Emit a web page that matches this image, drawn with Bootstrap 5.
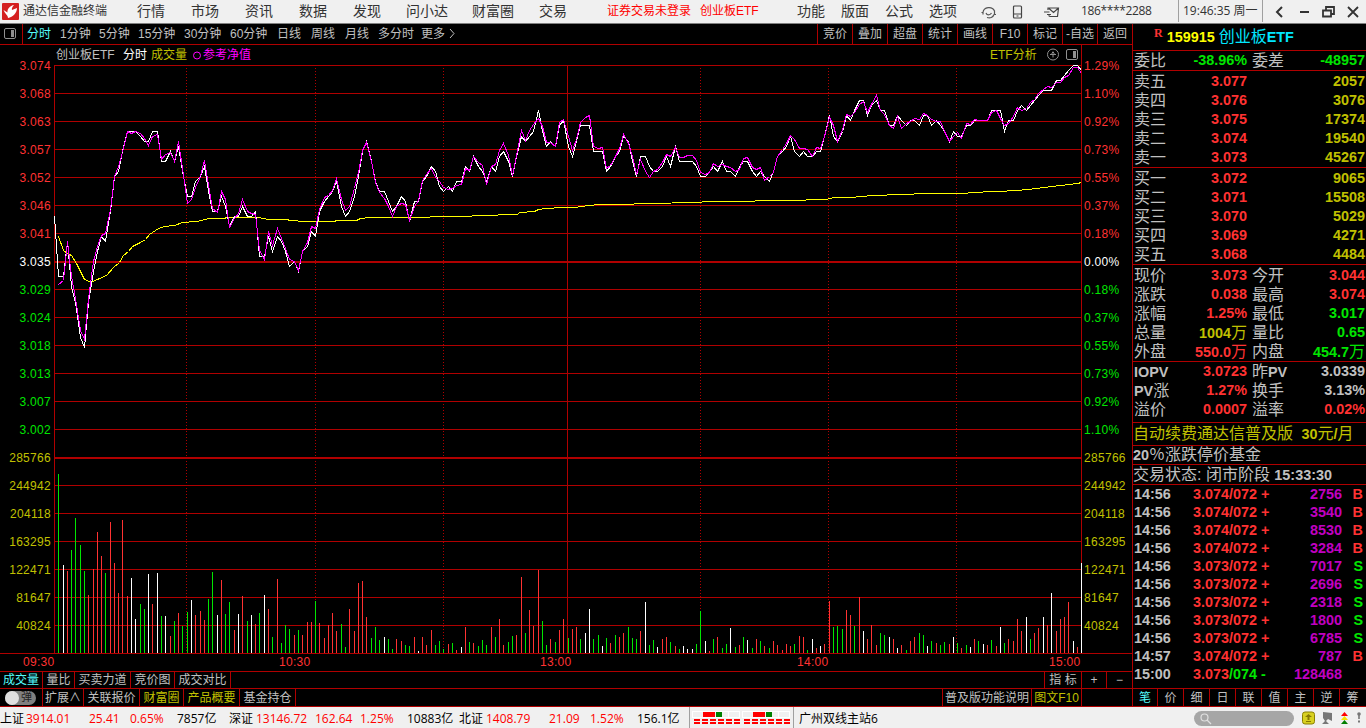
<!DOCTYPE html>
<html lang="zh-CN">
<head>
    <meta charset="UTF-8">
    <meta name="viewport" content="width=device-width, initial-scale=1.0">
    <title>通达信金融终端</title>
    <link href="https://cdn.jsdelivr.net/npm/bootstrap@5.3.0/dist/css/bootstrap.min.css" rel="stylesheet">
    <style>
        :root { --line: #b00000; --up: #ff3232; --down: #00e600; --txt: #c0c0c0; --gold: #c0c000; --cyan: #54fcfc; --vol: #c000c0; }
        html, body { height: 728px; overflow: hidden; }
        body { width: 1366px; background: #000; color: var(--txt); font: 12px/18px "Liberation Sans", "Noto Sans CJK SC", sans-serif; white-space: nowrap; }
        svg { display: block; }

        /* barre de titre */
        .topbar { height: 24px; background: #f0f0f0; border-bottom: 1px solid #808080; color: #333; font-size: 14px; line-height: 22px;
            grid-template-columns: 23px 114px repeat(4, 54px) 53px 66px 67px 68px 93px 97px 44px 44px 44px 52px 31px 32px 37px 97px 84px 12px 25px 23px 25px 18px; }
        .topbar .ui, .statusbar { font-family: "Open Sans", "Noto Sans CJK SC", sans-serif; }
        .topbar > svg { align-self: center; }
        .topbar .ui { letter-spacing: -.35px; }
        .topbar .clock { letter-spacing: 0; }
        .fs12 { font-size: 12px; }
        .hot { color: #f00; }
        .rule { border-left: 1px solid #a0a0a0; height: 22px; }

        .left-pane { width: 1132px; }
        .right-pane { width: 234px; border-left: 1px solid var(--line); }

        .toolbar { height: 21px; border-bottom: 1px solid var(--line); line-height: 20px;
            grid-template-columns: 22px 38px 39px 39px 46px 46px 47px 34px 34px 33px 43px 1fr; }
        .toolbar .periods-start { border-left: 1px solid var(--line); padding-left: 4px; }
        .tools span { width: 35px; border-left: 1px solid var(--line); text-align: center; }
        .chart-title { height: 20px; line-height: 21px; grid-template-columns: 56px 67px 28px 42px 797px 56px 19px 16px 1fr; }
        .chart-end { border-left: 1px solid var(--line); }
        .plot { overflow: visible; }
        .plot text { font: 12px "Liberation Sans", sans-serif; letter-spacing: .3px; }

        .tabrow { height: 17px; line-height: 16px; }
        .tabrow + .tabrow { height: 18px; line-height: 18px; }
        .tabrow, .split { border-bottom: 1px solid var(--line); }
        .tabrow span { border-right: 1px solid var(--line); text-align: center; }
        .w32 { width: 32px; } .w41 { width: 41px; } .w43 { width: 43px; } .w44 { width: 44px; } .w56 { width: 56px; }
        .w37 { width: 37px; } .w25 { width: 25px; } .w50 { width: 50px; } .w89 { width: 89px; }
        .toggle-pill { width: 31px; height: 14px; margin: 2px 6px 0 5px; border-radius: 7px; background: #808080; color: #222; font-size: 11px; line-height: 13px; padding-left: 16px; position: relative; }
        .toggle-pill::before { content: ""; position: absolute; left: 0; top: 0; width: 14px; height: 14px; border-radius: 50%; background: #e0e0e0; }

        /* panneau de cotation */
        .quote { font-size: 16px; line-height: 19px; }
        .quote b, .ticks { font: bold 14.4px/19px "Liberation Sans", sans-serif; }
        .quote-title { height: 27px; line-height: 26px; padding-left: 21px; color: #00e6ff; }
        .quote-title .flag { font-family: "Liberation Serif", serif; font-size: 12px; color: var(--up); }
        .quote-title .code { line-height: 27px; color: #ff0; }
        .qrow { display: grid; grid-template-columns: 42px 71px 5px 40px 73px; height: 19px; padding-left: 1px; }
        .qrow b { text-align: right; }
        .unit { font: 16px/16px "Noto Sans CJK SC", sans-serif; }
        .block5 { height: 97px; padding-top: 1px; } .block3 { height: 61px; }
        .h19 { height: 19px; line-height: 17px; } .h20 { height: 20px; } .h23 { height: 23px; line-height: 21px; }
        .ticks div { display: grid; grid-template-columns: 59px 68px 16px 65px 21px; height: 18px; line-height: 18px; padding-left: 1px; }
        .ticks { height: 204px; }
        .ticks i { font-style: normal; }
        .qtabs { height: 18px; line-height: 18px; }
        .qtabs span { width: 26px; border-left: 1px solid var(--line); text-align: center; }
        .qtabs span:first-child { width: 24px; border-left: 0; }
        .up { color: var(--up); } .dn { color: var(--down); } .gold { color: var(--gold); } .vol { color: var(--vol); }
        .cy { color: var(--cyan); } .wh { color: #fff; } .mg { color: #f0f; } .gy { color: var(--txt); }

        .statusbar { height: 21px; background: #f0f0f0; color: #000; line-height: 24px; font-size: 12px; grid-template-rows: 21px;
            grid-template-columns: 26px 63px 41px 47px 52px 27px 59px 45px 47px 52px 27px 63px 41px 47px 52px 104px 6px 395px 108px 19px 19px 16px 10px; }
        .statusbar em { font-style: normal; color: #f00; }
        .statusbar > svg { align-self: center; }
        .searchbox { width: 100px; height: 15px; margin-top: 4px; border-radius: 8px; background: #a6a6a6; padding: 1px 5px; }
    </style>
</head>
<body>
    <header class="topbar d-grid">
        <svg width="20" height="22" viewBox="0 0 20 22"><rect x="2" y="2" width="17" height="17" rx="1" fill="#d42020"/><path d="M3.500 9l4 2.500C7 8 10 4.500 14 4c-2 2-2.500 4-2 5l5-2c0 5-4 9-9 10 0-3-3-4-4.500-8z" fill="#fff"/></svg>
        <span class="fs12">通达信金融终端</span>
        <span>行情</span><span>市场</span><span>资讯</span><span>数据</span><span>发现</span><span>问小达</span><span>财富圈</span><span>交易</span>
        <span class="fs12 hot">证券交易未登录</span>
        <span class="fs12 hot">创业板ETF</span>
        <span>功能</span><span>版面</span><span>公式</span><span>选项</span>
        <svg width="16" height="16" fill="none" stroke="#555" stroke-width="1.200"><path d="M2 10.500V8.500a6 5.500 0 0 1 11.500-1.500M.5 8.500h2M13.500 6.500v4h1.500M13 10.500c-1 3-4 4-7 3M5 9c1 2.500 4 2.500 5.500 0"/></svg>
        <svg width="12" height="16" fill="none" stroke="#444" stroke-width="1.200"><rect x="1.500" y="2" width="8" height="12" rx="1"/><path d="M1.500 10h8M4.500 12h2"/></svg>
        <svg width="16" height="16" fill="none" stroke="#444" stroke-width="1.200"><path d="M4 6V4h10.500l-1 8.500H6l-1.500-1M5 4.500l4.500 4 5-4.500M0 8h5.500M3 10.500h4"/></svg>
        <span class="ui fs12">186****2288</span>
        <span class="ui clock fs12 rule ps-1">19:46:35 周一</span>
        <span class="rule"></span>
        <svg width="12" height="16" fill="none" stroke="#333" stroke-width="2"><path d="M8 3L3 8l5 5"/></svg>
        <svg width="12" height="16"><path d="M1 7h9v2H1z" fill="#333"/></svg>
        <svg width="14" height="16" fill="none" stroke="#333" stroke-width="1.800"><path d="M4 6V3h8v7H9"/><path d="M1 6.500h8v6H1z"/></svg>
        <svg width="14" height="16" fill="none" stroke="#333" stroke-width="1.800"><path d="M1 3l10 10M11 3L1 13"/></svg>
    </header>

    <div class="d-flex">
        <!-- Graphique intraday -->
        <main class="left-pane">
            <nav class="toolbar d-grid">
                <svg width="20" height="20"><rect x="4.500" y="4.500" width="11" height="10" rx="1.500" fill="none" stroke="#909090"/><path d="M11 6h3v7h-3z" fill="#909090"/></svg>
                <span class="periods-start cy">分时</span><span>1分钟</span><span>5分钟</span><span>15分钟</span><span>30分钟</span><span>60分钟</span><span>日线</span><span>周线</span><span>月线</span><span>多分时</span>
                <span class="d-flex">
                    <span>更多</span>
                    <svg width="11" height="20" fill="none" stroke="#c0c0c0"><path d="M5 5l4 4.500L5 14"/></svg>
                    <span class="tools d-flex ms-auto"><span>竞价</span><span>叠加</span><span>超盘</span><span>统计</span><span>画线</span><span>F10</span><span>标记</span><span>-自选</span><span>返回</span></span>
                </span>
            </nav>
            <div class="chart-title d-grid">
                <span></span><span>创业板ETF</span><span class="wh">分时</span><span class="gold">成交量</span>
                <span class="mg d-flex"><svg width="10" height="20" fill="none" stroke="#f0f"><circle cx="4" cy="10.500" r="3.500"/></svg>参考净值</span>
                <span class="gold">ETF分析</span>
                <svg width="14" height="20" fill="none" stroke="#909090"><circle cx="7" cy="9.500" r="5.500"/><path d="M7 6.500v6M4 9.500h6M5.500 8.500L7 7l1.500 1.500"/></svg>
                <svg width="14" height="20"><rect x="1.500" y="4.500" width="11" height="10" rx="1.500" fill="none" stroke="#909090"/><path d="M8 6h3v7H8z" fill="#909090"/></svg>
                <span class="chart-end"></span>
            </div>
            <svg class="plot" id="plot" width="1132" height="607" viewBox="0 65 1132 607" shape-rendering="crispEdges"></svg>
            <div class="tabrow d-flex">
                <span class="w43 cy">成交量</span><span class="w32">量比</span><span class="w56">买卖力道</span><span class="w44">竞价图</span><span class="w56">成交对比</span>
                <span class="ms-auto"></span><span class="w37">指 标</span><span class="w25">+</span><span class="w25 border-0">−</span>
            </div>
            <div class="tabrow d-flex">
                <div class="toggle-pill">弹</div><span></span>
                <span class="w41">扩展∧</span><span class="w56">关联报价</span><span class="w44 gold">财富圈</span><span class="w56 gold">产品概要</span><span class="w56">基金持仓</span>
                <span class="ms-auto"></span><span class="w89">普及版功能说明</span><span class="w50 gold">图文F10</span><span class="w50 border-0"></span>
            </div>
        </main>

        <!-- Panneau de droite -->
        <aside class="right-pane quote">
            <div class="quote-title split d-flex"><b class="flag me-1">R</b><b class="code me-1">159915</b><span>创业板<b>ETF</b></span></div>
            <div class="split h20"><div class="qrow"><span>委比</span><b class="dn">-38.96%</b><i></i><span>委差</span><b class="dn">-48957</b></div></div>
            <div class="split block5" id="asks"></div>
            <div class="split block5" id="bids"></div>
            <div class="split block5" id="stats"></div>
            <div class="split block3" id="fund"></div>
            <div class="split gold h23">自动续费通达信普及版 <b class="ms-1">30</b>元<b>/</b>月</div>
            <div class="split h19"><b>20</b>％涨跌停价基金</div>
            <div class="split h20">交易状态: 闭市阶段 <b>15:33:30</b></div>
            <div class="split ticks" id="ticks"></div>
            <div class="qtabs split d-flex fs12"><span class="cy">笔</span><span>价</span><span>细</span><span>日</span><span>联</span><span>值</span><span>主</span><span>逆</span><span>筹</span></div>
        </aside>
    </div>

    <footer class="statusbar d-grid">
        <span>上证</span><em>3914.01</em><em>25.41</em><em>0.65%</em><span>7857亿</span>
        <span>深证</span><em>13146.72</em><em>162.64</em><em>1.25%</em><span>10883亿</span>
        <span>北证</span><em>1408.79</em><em>21.09</em><em>1.52%</em><span>156.1亿</span>
        <svg id="meter" width="105" height="21" shape-rendering="crispEdges"></svg>
        <span></span>
        <span>广州双线主站6</span>
        <div class="searchbox"><svg width="13" height="13" fill="none" stroke="#e0e0e0" stroke-width="1.200"><circle cx="5.500" cy="5.500" r="3.500"/><path d="M8 8l4 4"/></svg></div>
        <svg width="13" height="14"><rect x=".5" y="1" width="12" height="12" rx="2.500" fill="#d8d020" stroke="#8a8000"/><path d="M6.500 3L10 6H7.500v3h-2V6H3zM4 10h5v1H4z" fill="#867800"/></svg>
        <svg width="13" height="14" fill="#777"><path d="M2 1l9 1v8l-4-2-2 2 3 3H1l3-3-2-3z"/></svg>
        <svg width="9" height="14"><path d="M4.500 1L8 5H1z" fill="red"/><path d="M4.500 5L8 9H1z" fill="#f5e000"/><path d="M4.500 9L8 13H1z" fill="green"/></svg>
        <svg width="6" height="14" fill="#777"><circle cx="3" cy="3" r="1.800"/><path d="M2.200 4h1.600v4H2.200zM2 9.500h2v2H2z"/></svg>
    </footer>

    <script src="https://cdn.jsdelivr.net/npm/bootstrap@5.3.0/dist/js/bootstrap.bundle.min.js"></script>
    <script>
        // Carnet d'ordres et statistiques
        const row = (a, b, bc, c = '', d = '', dc = 'gold') =>
            `<div class="qrow"><span>${a}</span><b class="${bc}">${b}</b><i></i><span>${c}</span><b class="${dc}">${d}</b></div>`;
        const unit = '<span class="unit">万</span>';
        const fill = (id, rows) => document.getElementById(id).innerHTML = rows.map(r => row(...r)).join('');

        fill('asks', [['卖五', '3.077', 'up', '', '2057'], ['卖四', '3.076', 'up', '', '3076'], ['卖三', '3.075', 'up', '', '17374'], ['卖二', '3.074', 'up', '', '19540'], ['卖一', '3.073', 'up', '', '45267']]);
        fill('bids', [['买一', '3.072', 'up', '', '9065'], ['买二', '3.071', 'up', '', '15508'], ['买三', '3.070', 'up', '', '5029'], ['买四', '3.069', 'up', '', '4271'], ['买五', '3.068', 'up', '', '4484']]);
        fill('stats', [['现价', '3.073', 'up', '今开', '3.044', 'up'], ['涨跌', '0.038', 'up', '最高', '3.074', 'up'], ['涨幅', '1.25%', 'up', '最低', '3.017', 'dn'],
            ['总量', '1004' + unit, 'gold', '量比', '0.65', 'dn'], ['外盘', '550.0' + unit, 'up', '内盘', '454.7' + unit, 'dn']]);
        fill('fund', [['<b>IOPV</b>', '3.0723', 'up', '昨<b>PV</b>', '3.0339', 'gy'], ['<b>PV</b>涨', '1.27%', 'up', '换手', '3.13%', 'gy'], ['溢价', '0.0007', 'up', '溢率', '0.02%', 'up']]);

        // Transactions
        const ticks = [['14:56', 4, 2756, 'B'], ['14:56', 4, 3540, 'B'], ['14:56', 4, 8530, 'B'], ['14:56', 4, 3284, 'B'], ['14:56', 3, 7017, 'S'], ['14:56', 3, 2696, 'S'],
            ['14:56', 3, 2318, 'S'], ['14:56', 3, 1800, 'S'], ['14:56', 3, 6785, 'S'], ['14:57', 4, 787, 'B']];
        document.getElementById('ticks').innerHTML = ticks.map(([t, p, v, s]) =>
            `<div><i>${t}</i><i class="up">3.07${p}/072</i><i class="up">+</i><i class="vol text-end">${v}</i><i class="${s === 'B' ? 'up' : 'dn'} text-end">${s}</i></div>`).join('') +
            '<div><i>15:00</i><i class="up">3.073<i class="dn">/074</i></i><i class="dn">-</i><i class="vol text-end">128468</i></div>';

        // Grille et axes
        const rect = (x, y, w, h, c) => `<rect x="${x}" y="${y}" width="${w}" height="${h}" fill="${c}"/>`;
        const RED = '#b00000';
        let svg = '';
        for (let k = 0; k < 21; k++) {
            const y = 65 + 28 * k;
            svg += rect(54, y, 1028, k === 7 || k === 14 ? 2 : 1, RED);
        }
        [54, 567, 1081].forEach(x => svg += rect(x, 65, 1, 588, RED));
        [186, 315, 443, 700, 828, 956].forEach(x => {
            svg += `<path d="M${x + .5} 68V653" stroke="${RED}" stroke-dasharray="1 2"/>`;
        });
        svg += rect(0, 653, 1132, 1, RED) + rect(0, 671, 1132, 1, RED);

        const prices = ['3.074', '3.068', '3.063', '3.057', '3.052', '3.046', '3.041', '3.035', '3.029', '3.024', '3.018', '3.013', '3.007', '3.002'];
        const pcts = ['1.29%', '1.10%', '0.92%', '0.73%', '0.55%', '0.37%', '0.18%', '0.00%', '0.18%', '0.37%', '0.55%', '0.73%', '0.92%', '1.10%'];
        const vols = [285766, 244942, 204118, 163295, 122471, 81647, 40824];
        const label = (x, y, t, c, end) => `<text x="${x}" y="${y}" fill="${c}" ${end ? 'text-anchor="end"' : ''}>${t}</text>`;
        prices.forEach((p, k) => {
            const c = k < 7 ? '#ff3232' : k === 7 ? '#fff' : '#00e600';
            svg += label(51, 70 + 28 * k, p, c, true) + label(1084, 70 + 28 * k, pcts[k], c);
        });
        vols.forEach((v, k) => svg += label(51, 462 + 28 * k, v, '#c0c000', true) + label(1084, 462 + 28 * k, v, '#c0c000'));
        [[23, '09:30'], [279, '10:30'], [540, '13:00'], [797, '14:00'], [1049, '15:00']].forEach(([x, t]) => svg += label(x, 666, t, '#ff3232'));

        // Volume par minute : couleur + hauteur en pixels, une ligne par demi-heure
        const volume = [
            'g179 w88 r82 g103 g135 g108 g82 r58 r84 r121 r97 g80 r131 r90 r60 r133 r57 w75 w34 g49 g44 w79 r49 w80 g37 w37 r17 g32 r40 g27',
            'g41 w53 r38 r42 r33 g54 g81 w38 r73 g39 g51 r23 w39 r57 g32 w38 r29 g40 w58 r44 g16 r74 g10 g28 g24 r18 g23 r18 r31 r31',
            'g52 r30 r15 r28 r40 r22 g29 g6 r44 r22 r70 r72 r36 g15 g26 g13 w16 g14 g4 r14 r12 g8 g7 r16 w2 r16 r8 r23 g8 g12',
            'g4 r9 g10 r3 w6 r26 g11 r10 g7 g13 g8 r26 g16 r34 r8 g11 g17 r18 r76 g20 r43 r27 r83 g32 g8 r14 g11 r23 r34 g15',
            'r24 r26 g14 w20 w44 g14 g18 w7 g15 r10 g18 r16 r20 g26 g15 g14 r22 w51 g8 g13 w6 r14 r16 g11 r7 g4 w7 w4 w4 g9',
            'g42 w12 r2 g14 r16 g5 g9 w25 g6 r8 g16 w13 g5 r14 g12 r7 g5 r12 r8 r3 r9 r7 g9 r17 r16 g3 w14 r5 w7 r9',
            'r52 g26 g27 g24 r43 r38 g27 r56 w22 r14 r28 r8 g20 g18 w16 r14 w5 r8 g3 r12 r16 g20 g18 w7 g12 r10 g8 g11 r9 w16',
            'g10 r5 g8 w6 r14 g12 w9 r8 g13 r7 w26 g10 r14 r12 r34 r22 w36 g14 r20 r25 w36 r28 w60 r22 r34 r36 r51 w12 r6 w90'
        ].join(' ').split(' ');
        const tone = { r: '#ff3232', g: '#00e600', w: '#fff' };
        volume.forEach((v, k) => {
            const h = +v.slice(1);
            svg += rect(Math.round(54 + 4.28 * (k + 1)), 653 - h, 1, h, tone[v[0]]);
        });

        // Cours, en millièmes par rapport à la clôture précédente (3.035)
        const last = [9, -3, -3, 4, -5, -8, -15, -17, -8, -2, 2, 5, 4, 10, 17, 18, 22, 26, 26, 26, 25, 24, 24, 26, 26, 20, 20, 22, 20, 23, 18, 13, 13, 16, 17, 19, 14, 10, 10, 13,
            11, 7, 9, 9, 11, 9, 9, 10, 1, 1, 5, 2, 5, 4, 2, -1, 0, -2, 2, 3, 6, 5, 10, 12, 13, 14, 16, 11, 9, 10, 13, 17, 22, 24, 20, 16, 14, 14, 12, 10,
            11, 13, 12, 8, 12, 12, 16, 17, 19, 18, 15, 14, 15, 14, 16, 16, 19, 18, 21, 19, 18, 16, 19, 18, 21, 22, 20, 17, 21, 25, 24, 25, 26, 30, 26, 23, 24, 23, 27, 28,
            23, 21, 24, 27, 27, 27, 22, 22, 22, 18, 19, 21, 22, 25, 24, 20, 17, 21, 21, 19, 18, 18, 19, 21, 19, 23, 20, 20, 20, 20, 19, 17, 17, 18, 19, 18, 20, 18, 18, 17,
            19, 20, 20, 18, 17, 18, 17, 16, 18, 21, 22, 23, 25, 22, 21, 22, 21, 21, 22, 22, 25, 29, 25, 24, 26, 29, 28, 30, 32, 32, 29, 31, 32, 30, 30, 27, 27, 29, 28, 27,
            28, 28, 27, 29, 29, 27, 28, 27, 26, 24, 26, 25, 25, 27, 27, 28, 28, 28, 28, 30, 30, 30, 26, 28, 28, 30, 31, 30, 31, 32, 33, 34, 34, 34, 36, 36, 37, 38, 39, 39, 38];
        // Valeur nette de référence, en tiers de pixel
        const nav = [674, 660, 545, 650, 715, 810, 838, 715, 605, 560, 527, 521, 448, 350, 320, 278, 214, 219, 213, 221, 236, 257, 230, 223, 297, 282, 276, 304, 245, 325,
            430, 418, 382, 348, 300, 375, 446, 457, 393, 418, 502, 475, 460, 419, 453, 461, 463, 570, 598, 515, 556, 506, 535, 565, 598, 605, 632, 575, 548, 500,
            506, 448, 412, 405, 392, 356, 418, 452, 440, 385, 338, 270, 247, 305, 367, 398, 415, 440, 470, 440, 430, 433, 481, 438, 420, 362, 343, 325, 351, 365,
            381, 388, 386, 376, 373, 325, 332, 290, 306, 316, 374, 318, 312, 272, 250, 285, 347, 285, 212, 242, 210, 192, 175, 200, 248, 247, 259, 187, 179, 228,
            270, 238, 188, 172, 166, 258, 266, 262, 324, 316, 290, 265, 223, 249, 290, 342, 298, 333, 352, 333, 328, 308, 283, 289, 263, 293, 292, 286, 286, 300,
            338, 344, 337, 311, 320, 312, 319, 323, 334, 328, 294, 293, 322, 328, 322, 360, 348, 338, 290, 268, 250, 227, 237, 265, 265, 267, 289, 263, 265, 228,
            172, 196, 243, 208, 163, 170, 158, 132, 124, 158, 132, 106, 152, 163, 197, 205, 168, 205, 190, 183, 175, 179, 161, 167, 178, 184, 185, 215, 243, 230,
            218, 235, 190, 192, 179, 181, 181, 180, 158, 152, 175, 196, 190, 168, 142, 150, 146, 126, 117, 100, 87, 79, 82, 67, 67, 52, 47, 22, 22, 40];
        const avg = '58,236 63,250 67,253 71,255 76,263 84,279 89,281 92,281 97,279 106,275 113,267 119,262 123,255 128,251 132,246 140,242 145,239 149,234 158,228 164,226 174,225 182,222 196,221 209,218 223,218 227,217 258,217 268,219 286,219 290,220 305,221 334,221 336,220 356,220 360,218 369,217 429,217 430,216 471,216 472,215 497,215 498,214 517,214 519,212 534,211 538,209 545,208 562,207 574,207 588,205 600,204 624,204 643,203 700,202 703,201 754,201 755,200 805,200 806,199 826,199 829,198 835,197 852,197 860,196 874,195 899,194 929,193 967,193 968,192 998,191 1015,190 1028,189 1044,187 1060,185 1077,183 1081,182';
        const line = (pts, c) => `<polyline points="${pts}" fill="none" stroke="${c}" transform="translate(.5 .5)"/>`;
        const px = i => Math.round(54 + 4.28 * i);
        svg += line(avg, '#ff0');
        svg += line(last.map((v, i) => `${px(i)},${Math.round(261.300 - v * 5.030)}`).join(' '), '#fff');
        svg += line(nav.map((v, i) => `${px(i + 1)},${Math.round(59.700 + v / 3)}`).join(' '), '#f0f');
        document.getElementById('plot').innerHTML = svg;

        // Indicateurs haussiers / baissiers du pied de page
        let meter = rect(0, 0, 1, 21, '#a0a0a0') + rect(104, 0, 1, 21, '#a0a0a0');
        [3, 53].forEach(x => {
            meter += rect(x, 4, 48, 7, '#fff') + rect(x + 1, 5, 46, 5, '#f0f0f0') + rect(x + 11, 5, 12, 5, '#f00') + rect(x + 24, 5, 6, 5, '#008000') + rect(x + 36, 5, 1, 5, '#fff');
            for (let k = 0; k < 6; k++) meter += rect(x + 2 + 8 * k, 12, 6, 2, '#f00') + rect(x + 2 + 8 * k, 15, 6, 2, '#f00');
        });
        document.getElementById('meter').innerHTML = meter;
    </script>
</body>
</html>
